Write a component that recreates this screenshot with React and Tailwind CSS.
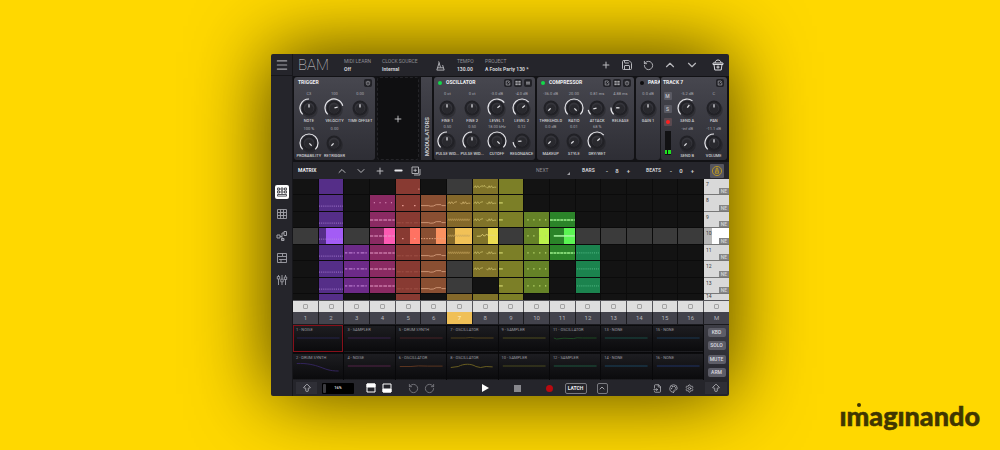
import React from "react";
import {
  Menu, Plus, Minus, Save, RotateCcw, RotateCw, ChevronUp, ChevronDown,
  CopyPlus, ArrowBigUp, FileInput, Palette, Settings,
} from "lucide-react";

/* ---------- knobs ---------- */

function polar(v, r) {
  const a = ((-135 + 270 * v) * Math.PI) / 180;
  return [10 + r * Math.sin(a), 10 - r * Math.cos(a)];
}

function Knob({ label, value, pos = 0.5, arc = false }) {
  const [nx1, ny1] = polar(pos, 0.5);
  const [nx2, ny2] = polar(pos, 3.8);
  const [sx, sy] = polar(0, 9);
  const [ex, ey] = polar(pos, 9);
  return (
    <div className="flex min-w-0 flex-col items-center whitespace-nowrap">
      <span className="h-[6px] text-[4px] leading-[6px] text-[#a9a9b0]">{value}</span>
      <svg viewBox="0 0 20 20" className="mt-px size-5 shrink-0" role="img" aria-label={label}>
        <circle cx="10.8" cy="11.8" r="8" fill="#000" opacity="0.2" />
        <circle cx="10" cy="10" r="7.5" fill="#212126" />
        <circle cx="10" cy="10" r="5.4" fill="#35353b" />
        <circle cx="10" cy="10.8" r="4.4" fill="#29292e" />
        <line x1={nx1} y1={ny1} x2={nx2} y2={ny2} stroke="#dcdce0" strokeWidth="1.3" />
        {arc && (
          <path
            d={`M${sx} ${sy} A9 9 0 ${pos > 0.66 ? 1 : 0} 1 ${ex} ${ey}`}
            fill="none" stroke="#e6e6ea" strokeWidth="1.2"
          />
        )}
      </svg>
      <span className="h-[6px] text-[4px] font-medium leading-[6px] text-[#d0d0d4]">{label}</span>
    </div>
  );
}

function MiniButton({ kind }) {
  return (
    <button type="button" aria-label={kind} className="flex size-[8px] items-center justify-center rounded-[2px] bg-[#222227] text-[#a5a5aa]">
      <svg viewBox="0 0 8 8" className="size-[8px]" fill="none" stroke="currentColor" strokeWidth="0.7">
        {kind === "Edit" && <path d="M5 2H2.2v4h3.6V3.5M3.6 4.4 5.8 2.2" />}
        {kind === "Pads" && <path d="M1.6 2h2v1.4h-2zM4.5 2h2v1.4h-2zM1.6 4.6h2V6h-2zM4.5 4.6h2V6h-2z" fill="currentColor" strokeWidth="0.3" />}
        {kind === "List" && <path d="M2 3.2h4M2 4.9h4" strokeWidth="1" />}
        {kind === "Power" && <path d="M2.3 2.4v2a1.7 1.7 0 0 0 3.4 0v-2M3 2.4h2M3.2 3.9h1.6" />}
      </svg>
    </button>
  );
}

function Card({ title, led, tools = [], children, className, cols }) {
  return (
    <section className={`flex shrink-0 flex-col rounded-[3px] bg-linear-to-b from-[#47474f] to-[#2e2e35] ${className}`}>
      <header className={`flex h-[11px] items-center gap-[2px] pl-1 ${tools.length ? "pr-[3px]" : ""}`}>
        {led && <span className={`mr-[2px] size-[4px] shrink-0 rounded-full ${led}`} />}
        <h2 className="flex-1 whitespace-nowrap text-[5px] font-bold leading-none text-[#efeff2]">{title}</h2>
        {tools.map((t) => <MiniButton key={t} kind={t} />)}
      </header>
      <div className={`mt-[3px] grid ${cols}`}>{children}</div>
    </section>
  );
}

/* ---------- matrix ---------- */

const TRACKS = {
  2: { bg: "bg-[#552e88]", hi: "bg-[#a35cf5]", on: [7, 8, 9, 10, 11, 12, 13, 14], start: "ml-[31%]" },
  3: { bg: "bg-[#6c2a88]", on: [11, 12, 13] },
  4: { bg: "bg-[#8a2a62]", hi: "bg-[#fb5ab2]", on: [8, 9, 10, 11, 12, 13], start: "ml-[58%]" },
  5: { bg: "bg-[#883a32]", hi: "bg-[#ff7262]", on: [7, 8, 9, 10, 11, 12, 13, 14], start: "ml-[58%]" },
  6: { bg: "bg-[#8a4f32]", hi: "bg-[#fa9160]", on: [8, 9, 10, 11, 12, 13], start: "ml-[58%]" },
  7: { bg: "bg-[#84682a]", hi: "bg-[#f1c157]", on: [8, 9, 10, 11, 14], grey: [7, 12, 13], start: "ml-[33%]" },
  8: { bg: "bg-[#807329]", hi: "bg-[#ecdc52]", on: [7, 8, 9, 10, 11, 12, 14], start: "ml-[60%]" },
  9: { bg: "bg-[#7c7f27]", on: [7, 8, 9, 11, 12, 13, 14] },
  10: { bg: "bg-[#658227]", hi: "bg-[#bbf14b]", on: [9, 10, 11, 12, 13], start: "ml-[58%]" },
  11: { bg: "bg-[#2b8429]", hi: "bg-[#5bf453]", on: [9, 10, 11], start: "ml-[58%]" },
  12: { bg: "bg-[#1b834e]", on: [11, 12, 13] },
};

const ROWS = [7, 8, 9, 10, 11, 12, 13, 14];
const COLS = Array.from({ length: 16 }, (_, i) => i + 1);

const SQUIGGLE = "M1 9l1.5-2 1 2 1.5-2 1.5 2 1.5-1.5 2.5-.5M14 8l1.5 1.5L17 7l1 2 1.5-2 1 2 2-.5h2";
const ZIGZAG = "M1 9l1-2 1 2 1-2 1 2 1-2 1 2 1-2 1 2 1-2 1 2 1-2 1 2 1-2 1 2 1-2 1 2 1-2 1 2 1-2 1 2 1-2 1 2 1-2";

function notes(col, row) {
  if (row === 14) return null;
  switch (col) {
    case 2: return row === 7 ? null : { d: "M0 11.5H26", dash: "1 1", w: 0.8, c: "#b78ee0" };
    case 3: return { d: "M1 8.2H24", dash: "2.5 1.5 4 1 1.5 2", w: 1, c: "#cf90e2" };
    case 4: return row === 8
      ? { d: "M4 8H24", dash: "1.2 4.8", w: 1.2, c: "#e79cc6" }
      : { d: "M0 8.2H26", dash: "3.5 1 4 1", w: 1.1, c: "#e89cc8" };
    case 5:
      if (row === 7) return { d: "M23.5 10.5h1.2", w: 1.2, c: "#dd8f86" };
      if (row === 8 || row === 10) return { d: "M6.5 11H21", dash: "1.4 11.2", w: 1.4, c: "#f3aaa0" };
      return { d: "M1 11.2H25", dash: "4 1 2 2", w: 0.6, c: "#b06256" };
    case 6: return row === 10
      ? { d: "M0 11H26", dash: "1.6 1.2", w: 1, c: "#e5a682" }
      : { d: "M0 11h8l2 .6 3-.2 3-1.4h5l1 1h4", w: 0.9, c: "#d69e7e" };
    case 7: return row === 8
      ? { d: SQUIGGLE, w: 0.8, c: "#d2b470" }
      : { d: ZIGZAG, w: 0.6, c: "#c6a55c" };
    case 8: return row === 10
      ? { d: "M4 8.5h4l2-2 2 2 2-2 2 1h8", w: 0.9, c: "#e6d67c" }
      : { d: row === 7 ? `${SQUIGGLE}M10 8.5l2-2 1 2` : SQUIGGLE, w: 0.8, c: "#cbbf69" };
    case 9: return row === 7 ? null : { d: "M0 8.2h4", w: 1.1, c: "#dcde76" };
    case 10: return { d: "M3.5 8.2H24", dash: "1.4 4.8", w: 1.4, c: "#b9d86c" };
    case 11: return row === 10
      ? { d: "M4 8.2h22", w: 1.6, c: "#a6f5a0" }
      : { d: "M0 8.2H26", dash: "3 .6", w: 1.6, c: "#9cf08c" };
    case 12: return { d: "M1 8.2H25", dash: "1 1", w: 0.9, c: "#5cc590" };
    default: return null;
  }
}

function Cell({ col, row }) {
  const t = TRACKS[col];
  const on = t && t.on.includes(row);
  const grey = row === 10 || (t && t.grey && t.grey.includes(row));
  const n = on ? notes(col, row) : null;
  const bg = on ? t.bg : grey ? "bg-[#3b3b3b]" : "bg-[#131313]";
  return (
    <button type="button" aria-label={`Track ${col} scene ${row}`} className={`grid min-h-0 min-w-0 overflow-hidden ${bg}`}>
      {on && row === 10 && t.hi && <span className={`col-start-1 row-start-1 ${t.hi} ${t.start}`} />}
      {n && (
        <svg viewBox="0 0 26 16" preserveAspectRatio="none" className="col-start-1 row-start-1 h-full w-full">
          <path d={n.d} fill="none" stroke={n.c} strokeWidth={n.w} strokeDasharray={n.dash} />
        </svg>
      )}
    </button>
  );
}

function Scene({ row }) {
  const last = row === 14;
  return (
    <button
      type="button"
      className={`flex min-h-0 items-stretch justify-between overflow-hidden pl-[2px] ${row === 10 ? "bg-linear-to-r from-[#b9b9b9] from-33% to-white to-33%" : "bg-[#d9d9d9]"}`}
    >
      <span className={`text-[5px] leading-none text-[#3b3b3b] ${last ? "" : "pt-[3px]"}`}>{row}</span>
      {!last && <span className="self-end bg-[#858585] px-[2px] text-[5px] font-medium leading-[6px] text-[#d5d5d5]">NE</span>}
    </button>
  );
}

/* ---------- instrument slots ---------- */

const FLAT = "M3 4H49";
const SLOTS = [
  ["1 - NOISE", "#272650", FLAT], ["3 - SAMPLER", "#3a2350", FLAT],
  ["5 - DRUM SYNTH", "#4c2428", FLAT], ["7 - OSCILLATOR", "#55451d", "M3 4h16l5-.4 5 .4h20"],
  ["9 - SAMPLER", "#525020", FLAT], ["11 - OSCILLATOR", "#1e4d24", "M3 4l3 1L14 4.2 24 4.6 28 3.8 34 4h15"],
  ["13 - NONE", "#1a5048", FLAT], ["15 - NONE", "#1b3a55", FLAT],
  ["2 - DRUM SYNTH", "#33245c", "M3 1.5C14 1 22 3 28 5S38 9 48 9"], ["4 - NOISE", "#55234a", FLAT],
  ["6 - OSCILLATOR", "#5e3620", "M3 4.5h12l8-.6 10 .2h16"], ["8 - OSCILLATOR", "#6a5e20", "M3 5.5l8-1c6-3 14-3 19 0l5 1 6-1 7 .4"],
  ["10 - SAMPLER", "#4e4e20", FLAT], ["12 - SAMPLER", "#1d5a40", FLAT],
  ["14 - NONE", "#1c4862", FLAT], ["16 - NONE", "#1f3568", FLAT],
];

function Slot({ name, color, d, active }) {
  return (
    <button
      type="button"
      className={`flex min-w-0 flex-col border bg-linear-to-b from-[#1d1d21] to-[#0b0b0d] text-left ${active ? "border-[#86101a]" : "border-transparent"}`}
    >
      <span className="whitespace-nowrap pl-[2px] pt-px text-[4px] leading-[6px] text-[#9a9aa0]">{name}</span>
      <svg viewBox="0 0 52 10" preserveAspectRatio="none" className="mt-px h-[10px] w-full">
        <path d={d} fill="none" stroke={color} strokeWidth="1" />
      </svg>
    </button>
  );
}

function Field({ label, value, className = "" }) {
  return (
    <div className={`flex flex-col gap-[3px] whitespace-nowrap text-[5px] leading-none ${className}`}>
      <span className="text-[#8d8d93]">{label}</span>
      <strong className="font-bold text-[#d2d2d6]">{value}</strong>
    </div>
  );
}

function Icon({ label, children, className = "" }) {
  return (
    <button type="button" aria-label={label} className={`flex shrink-0 items-center justify-center ${className}`}>
      {children}
    </button>
  );
}

function Stepper({ label, value, className }) {
  return (
    <div className={`flex items-center text-[6px] font-bold leading-none text-[#c9c9cd] ${className}`}>
      <span className="w-[22px] text-[5px]">{label}</span>
      <button type="button" aria-label={`Decrease ${label}`} className="w-[6px]">-</button>
      <output className="w-[14px] text-center">{value}</output>
      <button type="button" aria-label={`Increase ${label}`} className="w-[6px] text-right">+</button>
    </div>
  );
}

export default function App() {
  return (
    <main className="flex min-h-screen flex-col items-center overflow-hidden bg-[#ffd800] pt-[54px] font-['Roboto','Liberation_Sans',sans-serif]">
      <div className="flex w-[45.8%] min-w-[458px] rounded-[2px] bg-[#25252b] shadow-[0_-2px_80px_0_rgba(0,0,0,0.74)]">
        {/* Side navigation */}
        <nav className="flex w-[22px] shrink-0 flex-col items-center border-r border-[#17171b] text-[#a2a2a8]">
          <Icon label="Menu" className="h-[22px] w-full border-b border-[#17171b]"><Menu size={14} strokeWidth={2} /></Icon>
          <div className="mt-[109px] flex flex-col items-center gap-2">
            <Icon label="Matrix" className="size-[14px] rounded-[2px] bg-white text-[#44444a]">
              <svg viewBox="0 0 12 12" className="size-[12px]" fill="none" stroke="currentColor" strokeWidth="0.9">
                <path d="M1.5 2h2v2h-2zM5 2h2v2H5zM8.5 2h2v2h-2zM1.5 5h2v2h-2zM5 5h2v2H5zM8.5 5h2v2h-2zM1.5 8.5h9v1.6h-9z" />
              </svg>
            </Icon>
            <Icon label="Pads" className="size-[14px]">
              <svg viewBox="0 0 12 12" className="size-[12px]" fill="none" stroke="currentColor" strokeWidth="0.9">
                <path d="M1.5 1.5h9v9h-9zM1.5 4.5h9M1.5 7.5h9M4.5 1.5v9M7.5 1.5v9" />
                <circle cx="6" cy="6" r="1.8" />
              </svg>
            </Icon>
            <Icon label="Routing" className="size-[14px]">
              <svg viewBox="0 0 12 12" className="size-[12px]" fill="none" stroke="currentColor">
                <path d="M1 5h3v3H1zM4 6.5h2V9h2M6 6.5V3h2M8 1.5h2.5v4H8zM5.5 8.5H8v2H5.5z" />
              </svg>
            </Icon>
            <Icon label="Sequencer" className="size-[14px]">
              <svg viewBox="0 0 12 12" className="size-[12px]" fill="none" stroke="currentColor" strokeWidth="0.9">
                <path d="M1.5 1.5h9v9h-9zM1.5 4.5h5M5 7.5h5.5M6.5 1.5v3h4M5 7.5v3M3 7.5h2" />
              </svg>
            </Icon>
            <Icon label="Mixer" className="size-[14px]">
              <svg viewBox="0 0 12 12" className="size-[12px]" fill="none" stroke="currentColor" strokeWidth="0.9">
                <path d="M2.5 1v1.5M2.5 5v6M1.3 2.5h2.4V5H1.3zM6 1v4M6 8v3M4.8 5.2h2.4v2.6H4.8zM9.5 1v1.8M9.5 5.5V11M8.3 3h2.4v2.5H8.3z" />
              </svg>
            </Icon>
          </div>
        </nav>

        <div className="flex min-w-0 flex-1 flex-col">
          {/* Title bar */}
          <header className="flex h-[22px] items-center pl-[5px] text-[#b9b9bd]">
            <h1 className="w-[46px] text-[15px] font-thin leading-none text-[#d8d8dc]">BAM</h1>
            <Field label="MIDI LEARN" value="Off" className="w-[38px]" />
            <Field label="CLOCK SOURCE" value="Internal" className="w-[53px]" />
            <Icon label="Metronome" className="w-[11px]">
              <svg viewBox="0 0 12 12" className="size-[11px]" fill="none" stroke="currentColor">
                <path d="M4.5 3 2 11h8L8.3 5.5M6 8 4 1.5M2.7 8.5h6.6" />
              </svg>
            </Icon>
            <Field label="TEMPO" value="130.00" className="ml-[11px] w-[28px]" />
            <Field label="PROJECT" value="A Fools Party 130 *" />
            <div className="ml-auto flex items-center gap-[10px] pr-[5px]">
              <Icon label="New"><Plus size={10} strokeWidth={2.5} /></Icon>
              <Icon label="Save"><Save size={12} strokeWidth={2} /></Icon>
              <Icon label="Revert"><RotateCcw size={11} strokeWidth={2} /></Icon>
              <Icon label="Previous"><ChevronUp size={14} strokeWidth={2} className="-mx-px" /></Icon>
              <Icon label="Next"><ChevronDown size={14} strokeWidth={2} className="-mx-px" /></Icon>
              <Icon label="Store" className="ml-1">
                <svg viewBox="0 0 12 12" className="size-[12px]" fill="none" stroke="#dadade">
                  <path d="M1 4h10v1.5H1zM2 5.5l.8 5.5h6.4l.8-5.5M3 4c0-4 6-4 6 0M6 6.5v3.2M4.4 8.1h3.2" />
                </svg>
              </Icon>
            </div>
          </header>

          {/* Device rack */}
          <div className="flex h-[86px] gap-[2px] bg-[#121215] pb-[2px] pl-px pr-[2px] pt-px">
            <Card title="TRIGGER" tools={["Power"]} className="w-[81px]" cols="grid-cols-3 gap-y-[2px] px-[2px]">
              <Knob label="NOTE" value="C3" pos={0.5} arc />
              <Knob label="VELOCITY" value="100" pos={0.78} arc />
              <Knob label="TIME OFFSET" value="0.00" />
              <Knob label="PROBABILITY" value="100 %" pos={1} arc />
              <Knob label="RETRIGGER" value="0.00" pos={0} />
            </Card>
            <button type="button" aria-label="Add device" className="flex w-[42px] shrink-0 items-center justify-center rounded-[3px] border border-dashed border-[#242428] bg-[#0f0f11] text-[#d8d8dc]">
              <Plus size={10} strokeWidth={2} />
            </button>
            <div className="flex w-[11px] shrink-0 items-end justify-center bg-linear-to-b from-[#44444c] to-[#2e2e35] pb-1">
              <span className="rotate-180 text-[6px] font-medium leading-none text-[#d8d8dc] [writing-mode:vertical-rl]">MODULATORS</span>
            </div>
            <div className="-mr-[2px] flex min-w-0 flex-1 gap-[2px]">
              <Card title="OSCILLATOR" led="bg-[#12d94a]" tools={["Edit", "Pads", "List"]} className="w-[101px]" cols="grid-cols-4 px-px">
                <Knob label="FINE 1" value="0 ct" />
                <Knob label="FINE 2" value="0 ct" />
                <Knob label="LEVEL 1" value="-3.0 dB" pos={0.7} arc />
                <Knob label="LEVEL 2" value="-4.0 dB" pos={0.68} arc />
                <Knob label="PULSE WID..." value="0.50" pos={0.5} arc />
                <Knob label="PULSE WID..." value="0.50" pos={0.5} arc />
                <Knob label="CUTOFF" value="18.00 kHz" pos={1} arc />
                <Knob label="RESONANCE" value="0.12" pos={0.14} arc />
              </Card>
              <Card title="COMPRESSOR" led="bg-[#12d94a]" tools={["Edit", "Pads", "Power"]} className="w-[97px]" cols="grid-cols-4 px-[2px]">
                <Knob label="THRESHOLD" value="-36.0 dB" pos={0} />
                <Knob label="RATIO" value="20.00" pos={1} arc />
                <Knob label="ATTACK" value="0.81 ms" pos={0.12} arc />
                <Knob label="RELEASE" value="4.88 ms" pos={0.18} arc />
                <Knob label="MAKEUP" value="0.0 dB" pos={0} />
                <Knob label="STYLE" value="0.01" pos={0.01} />
                <Knob label="DRY/WET" value="68 %" pos={0.68} arc />
              </Card>
              <Card title="PARA" led="bg-[#0c0c0e]" className="w-6" cols="grid-cols-1 px-px">
                <Knob label="GAIN 1" value="0.0 dB" />
              </Card>
            </div>
            <section className="flex w-[67px] shrink-0 flex-col rounded-[3px] border-l border-[#17171b] bg-linear-to-b from-[#47474f] to-[#2e2e35]">
              <header className="flex h-[11px] items-center justify-between pl-[2px] pr-[3px]">
                <h2 className="text-[5px] font-bold leading-none text-[#efeff2]">TRACK 7</h2>
                <MiniButton kind="Edit" />
              </header>
              <div className="mt-[3px] flex">
                <div className="flex w-[13px] flex-col items-center gap-[5px] pt-px">
                  {["M", "S"].map((b) => (
                    <button key={b} type="button" className="size-[8px] rounded-[1px] bg-[#5a5a63] text-[5px] font-medium leading-none text-[#c5c5ca]">{b}</button>
                  ))}
                  <Icon label="Record arm" className="size-[8px] rounded-[1px] bg-[#5a4a50]"><span className="size-[4px] rounded-full bg-[#ff1f1f]" /></Icon>
                  <div className="flex h-[24px] w-[6px] items-end gap-px bg-[#111113] pb-px">
                    <span className="h-[4px] flex-1 bg-[#1fe01f]" />
                    <span className="h-[4px] flex-1 bg-[#1fe01f]" />
                  </div>
                </div>
                <div className="grid flex-1 grid-cols-2 gap-y-[2px]">
                  <Knob label="SEND A" value="-5.2 dB" pos={0.64} arc />
                  <Knob label="PAN" value="C" />
                  <Knob label="SEND B" value="-inf dB" pos={0} />
                  <Knob label="VOLUME" value="-11.1 dB" pos={0.5} arc />
                </div>
              </div>
            </section>
          </div>

          {/* Matrix toolbar */}
          <div className="flex h-[17px] items-center pl-[5px] text-[#b9b9bd]">
            <h2 className="w-[38px] text-[5px] font-bold leading-none text-[#ececf0]">MATRIX</h2>
            <div className="flex items-center gap-[7px]">
              <Icon label="Scene up"><ChevronUp size={12} strokeWidth={2} /></Icon>
              <Icon label="Scene down"><ChevronDown size={12} strokeWidth={2} /></Icon>
              <Icon label="Add scene" className="w-[11px]"><Plus size={10} strokeWidth={2.5} /></Icon>
              <Icon label="Remove scene" className="w-[12px] text-[#e6e6ea]"><Minus size={11} strokeWidth={4} /></Icon>
              <Icon label="Duplicate scene">
                <svg viewBox="0 0 10 10" className="size-[10px]" fill="none" stroke="currentColor" strokeWidth="0.9">
                  <path d="M1 1h6.5v6.5H1zM9 3v6H3M4.2 2.6v3.4M2.5 4.3h3.4" />
                </svg>
              </Icon>
            </div>
            <span className="ml-auto w-[31px] text-[5px] leading-none text-[#8d8d93]">NEXT</span>
            <svg viewBox="0 0 4 4" className="mr-3 mt-[6px] size-[3px]"><path d="M4 0v4H0z" fill="#a0a0a5" /></svg>
            <Stepper label="BARS" value="8" className="mr-4" />
            <Stepper label="BEATS" value="0" className="mr-4" />
            <Icon label="Loop" className="mr-[5px] size-[14px] rounded-[1px] bg-[#55555e]">
              <svg viewBox="0 0 12 12" className="size-[12px]" fill="none" stroke="#bd9a22" strokeWidth="0.9">
                <circle cx="6" cy="6" r="4.6" /><path d="M4.2 8.2 5.5 3h1l1.3 5.2zM6 7V4.5" />
              </svg>
            </Icon>
          </div>

          {/* Clip matrix */}
          <div className="flex gap-px bg-[#0a0a0a]">
            <div className="grid h-[121px] flex-1 grid-cols-[repeat(16,minmax(0,1fr))] grid-rows-[repeat(7,minmax(0,16fr))_minmax(0,6fr)] gap-px bg-[#0b0b0b]">
              {ROWS.map((r) => COLS.map((c) => <Cell key={`${r}-${c}`} col={c} row={r} />))}
            </div>
            <div className="grid h-[121px] w-[25px] shrink-0 grid-rows-[repeat(7,minmax(0,16fr))_minmax(0,6fr)] gap-px bg-[#777777]">
              {ROWS.map((r) => <Scene key={r} row={r} />)}
            </div>
          </div>

          {/* Stop row */}
          <div className="flex h-[12px] gap-px bg-[#55555a] pt-px">
            <div className="grid flex-1 grid-cols-[repeat(16,minmax(0,1fr))] gap-px">
              {COLS.map((c) => (
                <label key={c} className="flex items-center justify-center bg-[#dedede]">
                  <input type="checkbox" aria-label={`Stop track ${c}`} className="size-[5px] appearance-none rounded-[1px] border border-[#a3a3a3]" />
                </label>
              ))}
            </div>
            <label className="flex w-[25px] shrink-0 items-center justify-center bg-[#dedede]">
              <input type="checkbox" aria-label="Stop all" className="size-[5px] appearance-none rounded-[1px] border border-[#a3a3a3]" />
            </label>
          </div>

          {/* Track numbers */}
          <div className="flex h-[13px] gap-px bg-[#1b1b1f] pb-px text-[6px] leading-none text-[#b4b4ba]">
            <div className="grid flex-1 grid-cols-[repeat(16,minmax(0,1fr))] gap-px">
              {COLS.map((c) => (
                <button key={c} type="button" className={c === 7 ? "bg-[#f0c057] text-[#fff2cf]" : "bg-[#43434c]"}>{c}</button>
              ))}
            </div>
            <button type="button" className="w-[25px] shrink-0 bg-[#43434c]">M</button>
          </div>

          {/* Instruments */}
          <div className="flex gap-px bg-[#08080a]">
            <div className="grid h-[55px] flex-1 grid-cols-[repeat(8,minmax(0,1fr))] grid-rows-2 gap-px">
              {SLOTS.map(([n, c, d], i) => <Slot key={n} name={n} color={c} d={d} active={i === 0} />)}
            </div>
            <div className="flex w-[25px] shrink-0 flex-col items-center justify-between bg-linear-to-b from-[#3d3d45] to-[#25252b] py-[3px]">
              {["KBD", "SOLO", "MUTE", "ARM"].map((b) => (
                <button key={b} type="button" className="h-[9px] w-[18px] rounded-[2px] bg-[#5d5d67] text-[5px] font-medium leading-none text-[#dcdce0]">{b}</button>
              ))}
            </div>
          </div>

          {/* Transport */}
          <footer className="flex h-[16px] items-center pl-[3px] pr-[2px] text-[#b8b8bd]">
            <Icon label="Octave up" className="h-[12px] w-[21px] bg-[#2f2f36]"><ArrowBigUp size={10} strokeWidth={2} /></Icon>
            <div className="ml-[5px] flex h-[11px] w-[32px] items-center rounded-[1px] bg-black">
              <span className="ml-px h-[9px] w-[3px] rounded-[1px] bg-[#3c3c40]" />
              <span className="flex-1 pr-1 text-center text-[4px] font-bold leading-none text-[#d0d0d4]">16%</span>
            </div>
            <Icon label="Top panel" className="ml-3">
              <svg viewBox="0 0 10 10" className="size-[10px]" fill="none" stroke="#fff"><path d="M1 1h8v8H1z" /><path d="M1 1h8v3H1z" fill="#fff" /></svg>
            </Icon>
            <Icon label="Bottom panel" className="ml-[6px]">
              <svg viewBox="0 0 10 10" className="size-[10px]" fill="none" stroke="#fff"><path d="M1 1h8v8H1z" /><path d="M1 6h8v3H1z" fill="#fff" /></svg>
            </Icon>
            <Icon label="Undo" className="ml-4 text-[#77777d]"><RotateCcw size={11} strokeWidth={2} /></Icon>
            <Icon label="Redo" className="ml-[5px] text-[#77777d]"><RotateCw size={11} strokeWidth={2} /></Icon>
            <div className="grow" />
            <Icon label="Play"><svg viewBox="0 0 8 8" className="size-[8px]"><path d="M1 0l7 4-7 4z" fill="#fff" /></svg></Icon>
            <Icon label="Stop" className="ml-[25px]"><span className="size-[7px] bg-[#88888d]" /></Icon>
            <Icon label="Record" className="ml-[25px]"><span className="size-[7px] rounded-full bg-[#b80a10]" /></Icon>
            <button type="button" className="ml-3 h-[11px] w-[22px] rounded-[2px] border border-[#7a7a80] text-[5px] font-bold leading-none text-[#ececf0]">LATCH</button>
            <Icon label="Expand" className="ml-[10px] size-[11px] rounded-[2px] border border-[#7a7a80]"><ChevronUp size={8} strokeWidth={2.5} /></Icon>
            <div className="grow" />
            <Icon label="Export"><FileInput size={9} strokeWidth={2} /></Icon>
            <Icon label="Theme" className="ml-[7px]"><Palette size={9} strokeWidth={2} /></Icon>
            <Icon label="Settings" className="ml-[7px]"><Settings size={9} strokeWidth={2} /></Icon>
            <Icon label="Shift" className="ml-[11px] h-[12px] w-[22px] bg-[#2f2f36]"><ArrowBigUp size={10} strokeWidth={2} /></Icon>
          </footer>
        </div>
      </div>

      {/* Brand */}
      <a href="#imaginando" aria-label="imaginando" className="relative mr-5 mt-1 self-end font-['Lato',sans-serif] text-[27px] font-black leading-8 text-[#403600] [-webkit-text-stroke:0.5px_#403600]">
        ımagınando
        <span className="absolute left-[17px] top-[3px] size-[4px] rounded-full bg-[#403600]" />
      </a>
    </main>
  );
}
